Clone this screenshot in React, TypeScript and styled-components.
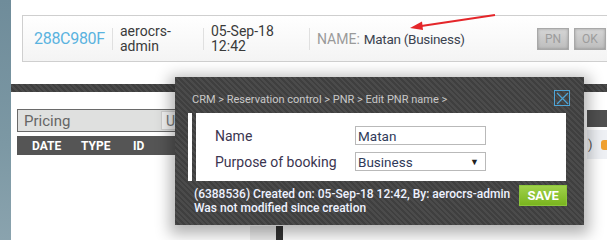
import React from 'react';
import styled, { createGlobalStyle } from 'styled-components';

const GlobalStyle = createGlobalStyle`
  html, body {
    margin: 0;
    padding: 0;
    background: #fff;
    font-family: Roboto, "Liberation Sans", Arial, sans-serif;
  }
`;

const stripes = `repeating-linear-gradient(45deg, #4b4b4b 0px, #4b4b4b 2px, #3f3f3f 2px, #3f3f3f 4px)`;

const Page = styled.div`
  position: relative;
  display: flex;
  width: 607px;
  height: 240px;
  overflow: hidden;
  background: #fff;
`;

const Strip = styled.div`
  width: 11px;
  flex-shrink: 0;
  background: linear-gradient(180deg, #6f8c9a 0%, #7c98a4 60%, #8aa3ae 100%);
`;

const Main = styled.div`
  flex: 1;
  display: flex;
  flex-direction: column;
  min-width: 0;
`;

const HeaderWrap = styled.div`
  padding: 15px 0 0 11px;
`;

const HeaderCard = styled.div`
  display: flex;
  align-items: center;
  height: 45px;
  width: 620px;
  border: 1px solid #cfcfcf;
  background: linear-gradient(180deg, #ffffff 0%, #f4f4f4 100%);
`;

const Cell = styled.div<{ $w?: number; $sep?: boolean }>`
  display: flex;
  align-items: center;
  width: ${p => (p.$w ? `${p.$w}px` : 'auto')};
  flex-shrink: 0;
  box-sizing: border-box;
  padding-left: 7px;
  height: 22px;
  border-left: ${p => (p.$sep ? '1px solid #e0e0e0' : 'none')};
`;

const Pnr = styled.span`
  margin-left: 4px;
  font-size: 16px;
  color: #5ab3df;
  letter-spacing: -0.3px;
`;

const Stack = styled.span`
  font-size: 14px;
  line-height: 15px;
  color: #3a3a3a;
`;

const NameLabel = styled.span`
  font-size: 14px;
  color: #9a9a9a;
  margin-right: 4px;
`;

const NameValue = styled.span`
  font-size: 13.5px;
  letter-spacing: -0.3px;
  color: #3c4350;
`;

const HeadButtons = styled.div`
  display: flex;
  gap: 5px;
  margin-left: auto;
  margin-right: 37px;
`;

const GrayButton = styled.div`
  width: 32px;
  height: 22px;
  box-sizing: border-box;
  display: flex;
  align-items: center;
  justify-content: center;
  font-size: 12px;
  color: #9c9c9c;
  border: 1px solid #a8a8a8;
  background: linear-gradient(180deg, #d6d6d6 0%, #bdbdbd 100%);
  box-shadow: inset 0 0 3px rgba(0, 0, 0, 0.25);
`;

const DarkBar = styled.div`
  margin-top: 22px;
  height: 8px;
  background: ${stripes};
`;

const Content = styled.div`
  display: grid;
  grid-template-columns: 380px 1fr;
  gap: 190px;
  padding: 17px 0 0 6px;
`;

const Column = styled.div`
  display: flex;
  flex-direction: column;
`;

const PricingBox = styled.div`
  display: flex;
  align-items: center;
  justify-content: space-between;
  width: 161px;
  height: 23px;
  box-sizing: border-box;
  border: 1px solid #6a6a6a;
  background: #dfe0df;
  padding: 0 1px 0 6px;
  font-size: 15px;
  color: #666;
`;

const Unit = styled.div`
  width: 15px;
  height: 19px;
  display: flex;
  align-items: center;
  justify-content: flex-end;
  box-sizing: border-box;
  background: #f2f2f2;
  border: 1px solid #cfcfcf;
  font-size: 14px;
  color: #777;
  overflow: hidden;
`;

const TableHead = styled.div`
  display: flex;
  align-items: center;
  margin-top: 4px;
  height: 19px;
  background: #555;
  padding-left: 15px;
`;

const HeadCell = styled.span<{ $w: number }>`
  width: ${p => p.$w}px;
  font-size: 12px;
  font-weight: 700;
  color: #fff;
`;

const RightHead = styled.div`
  height: 17px;
  margin-top: 1px;
  background: #505050;
`;

const RightRow = styled.div`
  display: flex;
  align-items: center;
  justify-content: space-between;
  margin-top: 3px;
  height: 29px;
  background: #eef0f4;
  padding-left: 1px;
  font-size: 13px;
  color: #555;
`;

const OrangeDot = styled.span`
  width: 6px;
  height: 10px;
  border-radius: 3px 0 0 3px;
  background: #f0a030;
`;

const BehindBlock = styled.div`
  position: absolute;
  left: 250px;
  top: 226px;
  display: flex;
`;

const LightCol = styled.div`
  width: 26px;
  height: 14px;
  background: #ececec;
`;

const DarkCol = styled.div`
  width: 7px;
  height: 14px;
  background: #333;
`;

const Arrow = styled.svg`
  position: absolute;
  left: 400px;
  top: 8px;
`;

const Modal = styled.div`
  position: absolute;
  left: 175px;
  top: 77px;
  width: 409px;
  height: 148px;
  box-sizing: border-box;
  padding: 12px 14px 0 13px;
  background: ${stripes};
  box-shadow: 0 4px 14px 5px rgba(0, 0, 0, 0.3);
  display: flex;
  flex-direction: column;
`;

const TitleRow = styled.div`
  display: flex;
  align-items: center;
  justify-content: space-between;
  height: 18px;
  padding-left: 4px;
`;

const Title = styled.span`
  font-size: 11px;
  color: #c9c9c9;
  margin-top: 2px;
`;

const CloseBox = styled.div`
  width: 16px;
  height: 16px;
  box-sizing: border-box;
  border: 1.5px solid #4ea4d6;
  display: flex;
  align-items: center;
  justify-content: center;
`;

const Frame = styled.div`
  margin-top: 6px;
  margin-left: 3px;
  padding-left: 4px;
  border-left: 1px solid #fff;
  box-shadow: -3px 0 0 #fff;
`;

const Panel = styled.div`
  width: 370px;
  height: 68px;
  box-sizing: border-box;
  background: #fff;
  padding: 13px 0 0 19px;
  display: flex;
  flex-direction: column;
  gap: 7px;
`;

const FormRow = styled.div`
  display: flex;
  align-items: center;
  height: 19px;
`;

const Label = styled.span`
  width: 140px;
  font-size: 14px;
  color: #3b3550;
`;

const Field = styled.div`
  width: 131px;
  height: 19px;
  box-sizing: border-box;
  border: 1px solid #b9b9b9;
  display: flex;
  align-items: center;
  justify-content: space-between;
  padding: 0 6px 0 2px;
  font-size: 13.5px;
  color: #2f3a5a;
`;

const Caret = styled.span`
  font-size: 9px;
  color: #222;
`;

const Footer = styled.div`
  display: flex;
  justify-content: space-between;
  align-items: flex-start;
  margin-top: 3px;
  padding-left: 6px;
`;

const Meta = styled.div`
  font-size: 12px;
  line-height: 14px;
  font-weight: 500;
  color: #eef2ff;
  margin-top: 3px;
`;

const SaveButton = styled.div`
  width: 48px;
  height: 21px;
  margin-top: 1px;
  margin-right: 3px;
  box-sizing: border-box;
  display: flex;
  align-items: center;
  justify-content: center;
  font-size: 13px;
  font-weight: 700;
  color: #fff;
  background: linear-gradient(180deg, #9fd14a 0%, #7ab51f 100%);
  border: 1px solid #8cc63a;
  letter-spacing: -0.3px;
`;

export default function App() {
  return (
    <Page>
      <GlobalStyle />
      <Strip />
      <Main>
        <HeaderWrap>
          <HeaderCard>
            <Cell $w={89}>
              <Pnr>288C980F</Pnr>
            </Cell>
            <Cell $w={91} $sep>
              <Stack>aerocrs-<br />admin</Stack>
            </Cell>
            <Cell $w={106} $sep>
              <Stack>05-Sep-18<br />12:42</Stack>
            </Cell>
            <Cell $sep>
              <NameLabel>NAME:</NameLabel>
              <NameValue>Matan (Business)</NameValue>
            </Cell>
            <HeadButtons>
              <GrayButton>PN</GrayButton>
              <GrayButton>OK</GrayButton>
            </HeadButtons>
          </HeaderCard>
        </HeaderWrap>
        <DarkBar />
        <Content>
          <Column>
            <PricingBox>
              Pricing
              <Unit>U</Unit>
            </PricingBox>
            <TableHead>
              <HeadCell $w={49}>DATE</HeadCell>
              <HeadCell $w={52}>TYPE</HeadCell>
              <HeadCell $w={40}>ID</HeadCell>
            </TableHead>
          </Column>
          <Column>
            <RightHead />
            <RightRow>
              <span>)</span>
              <OrangeDot />
            </RightRow>
          </Column>
        </Content>
      </Main>

      <BehindBlock>
        <LightCol />
        <DarkCol />
      </BehindBlock>

      <Arrow width="100" height="26" viewBox="0 0 100 26">
        <line x1="95" y1="7" x2="18" y2="18.5" stroke="#e4262a" strokeWidth="2.2" />
        <polygon points="10,20 22,13.5 23,22" fill="#e4262a" />
      </Arrow>

      <Modal>
        <TitleRow>
          <Title>CRM &gt; Reservation control &gt; PNR &gt; Edit PNR name &gt;</Title>
          <CloseBox>
            <svg width="13" height="13" viewBox="0 0 13 13">
              <path d="M1 1 L12 12 M12 1 L1 12" stroke="#4ea4d6" strokeWidth="1.2" />
            </svg>
          </CloseBox>
        </TitleRow>
        <Frame>
          <Panel>
            <FormRow>
              <Label>Name</Label>
              <Field>Matan</Field>
            </FormRow>
            <FormRow>
              <Label>Purpose of booking</Label>
              <Field>
                Business
                <Caret>▼</Caret>
              </Field>
            </FormRow>
          </Panel>
        </Frame>
        <Footer>
          <Meta>
            (6388536) Created on: 05-Sep-18 12:42, By: aerocrs-admin
            <br />
            Was not modified since creation
          </Meta>
          <SaveButton>SAVE</SaveButton>
        </Footer>
      </Modal>
    </Page>
  );
}
